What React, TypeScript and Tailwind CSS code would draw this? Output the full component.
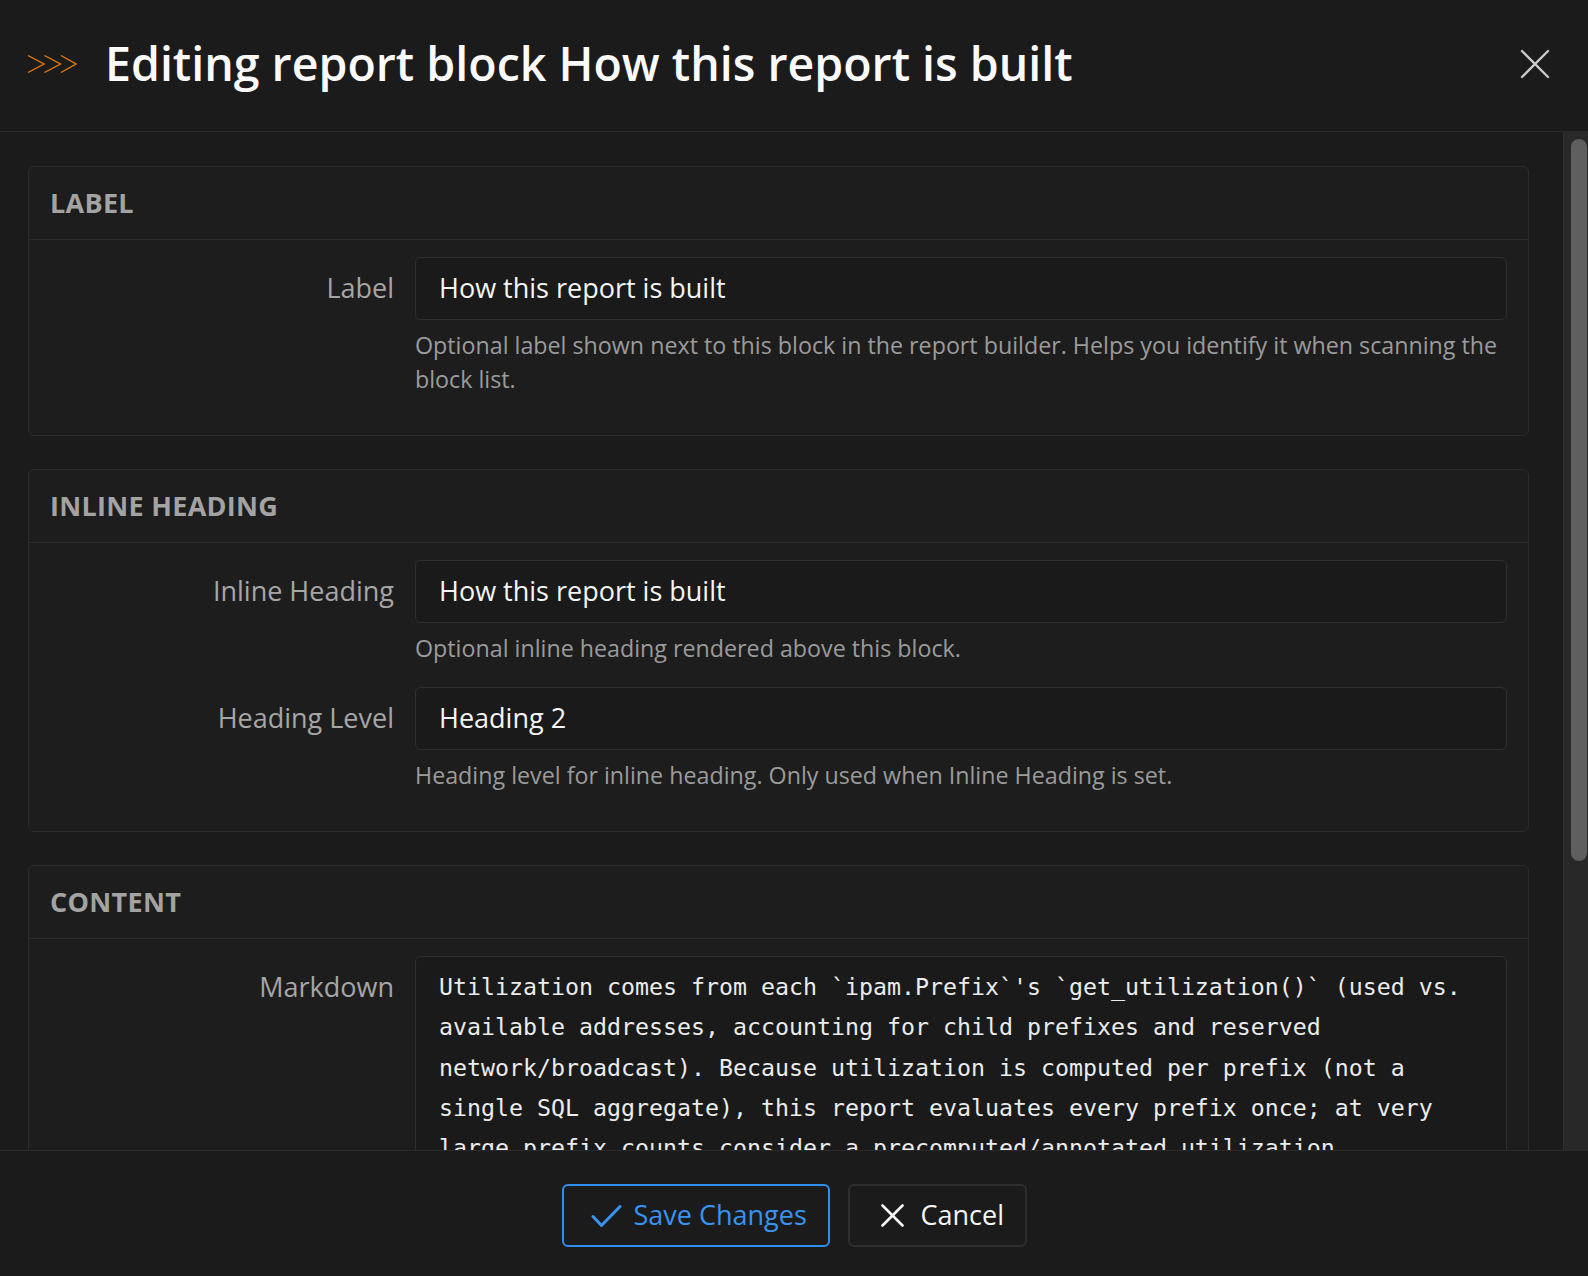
// Report block editor dialog: label, inline heading and markdown content sections
import type { ReactNode } from 'react';

const markdownLines = [
  "Utilization comes from each `ipam.Prefix`'s `get_utilization()` (used vs.",
  'available addresses, accounting for child prefixes and reserved',
  'network/broadcast). Because utilization is computed per prefix (not a',
  'single SQL aggregate), this report evaluates every prefix once; at very',
  'large prefix counts consider a precomputed/annotated utilization',
];

function Section({ title, children }: { title: string; children: ReactNode }) {
  return (
    <section className="rounded-[6px] border border-[#2b2b2b] bg-[#1d1d1d]">
      <div className="flex h-[73px] items-center border-b border-[#2b2b2b] px-[21px]">
        <h2 className="text-[27px] font-bold uppercase tracking-[0.3px] text-[#a3a3a3]">{title}</h2>
      </div>
      <div className="px-[21px] pt-[17px] pb-[18px]">{children}</div>
    </section>
  );
}

function Field({ label, children, help }: { label: string; children: ReactNode; help?: string }) {
  return (
    <div className="mb-[21px] flex">
      <div className="flex h-[63px] w-[344px] shrink-0 items-center justify-end text-[27px] text-[#a6a6a6]">{label}</div>
      <div className="ml-[21px] min-w-0 flex-1">
        {children}
        {help && <p className="mt-[9px] text-[23.25px] leading-[33.5px] text-[#9b9b9b]">{help}</p>}
      </div>
    </div>
  );
}

function TextInput({ value }: { value: string }) {
  return (
    <div className="flex h-[63px] items-center rounded-[6px] border border-[#303030] bg-[#1a1a1a] px-[23px] text-[27px] text-[#f5f5f5]">
      {value}
    </div>
  );
}

export default function App() {
  return (
    <div className="flex h-screen flex-col overflow-hidden bg-[#1b1b1b] font-['Open_Sans',sans-serif] text-white">
      <header className="flex h-[132px] shrink-0 items-center border-b border-[#2a2a2a] bg-[#1b1b1b] pb-[3px] pl-[27px] pr-[38px]">
        <svg width="50" height="20" viewBox="0 0 50 20" fill="none" stroke="#e8790c" strokeWidth="1.4" strokeLinejoin="miter">
          <polyline points="1,1.5 17,10 1,18.5" />
          <polyline points="17.5,1.5 33.5,10 17.5,18.5" />
          <polyline points="34,1.5 49,10 34,18.5" />
        </svg>
        <h1 className="ml-[28px] flex-1 text-[46.5px] font-semibold text-[#fafafa]">
          Editing report block How this report is built
        </h1>
        <button className="flex h-[30px] w-[30px] items-center justify-center">
          <svg width="30" height="30" viewBox="0 0 30 30" stroke="#c9c9c9" strokeWidth="2.4" strokeLinecap="round">
            <line x1="2" y1="2" x2="28" y2="28" />
            <line x1="28" y1="2" x2="2" y2="28" />
          </svg>
        </button>
      </header>

      <div className="flex min-h-0 flex-1">
        <main className="min-w-0 flex-1 overflow-hidden pt-[34px] pl-[28px] pr-[34px]">
          <div className="flex flex-col gap-[33px]">
            <Section title="Label">
              <Field
                label="Label"
                help="Optional label shown next to this block in the report builder. Helps you identify it when scanning the block list."
              >
                <TextInput value="How this report is built" />
              </Field>
            </Section>

            <Section title="Inline Heading">
              <Field label="Inline Heading" help="Optional inline heading rendered above this block.">
                <TextInput value="How this report is built" />
              </Field>
              <Field label="Heading Level" help="Heading level for inline heading. Only used when Inline Heading is set.">
                <TextInput value="Heading 2" />
              </Field>
            </Section>

            <Section title="Content">
              <Field label="Markdown">
                <div className="h-[320px] rounded-[6px] border border-[#303030] bg-[#1a1a1a] px-[23px] pt-[10px] font-['DejaVu_Sans_Mono',monospace] text-[23.25px] leading-[40.25px] text-[#ececec]">
                  {markdownLines.map((line) => (
                    <div key={line} className="whitespace-pre">
                      {line}
                    </div>
                  ))}
                </div>
              </Field>
            </Section>
          </div>
        </main>
        <div className="w-[25px] shrink-0 border-l border-[#303030] bg-[#282828] pt-[7px] pl-[7px]">
          <div className="h-[722px] w-[16px] rounded-full bg-[#5f5f5f]" />
        </div>
      </div>

      <footer className="flex h-[126px] shrink-0 justify-center gap-[18px] border-t border-[#2a2a2a] bg-[#1b1b1b] pt-[33px]">
        <button className="flex h-[63px] w-[268px] items-center gap-[12px] rounded-[6px] border-2 border-[#2f8fef] pl-[27px] text-[27px] text-[#3894f0]">
          <svg width="31" height="24" viewBox="0 0 31 24" fill="none" stroke="#3894f0" strokeWidth="3" strokeLinecap="round" strokeLinejoin="round">
            <polyline points="2,12.5 10.5,21.5 29,2.5" />
          </svg>
          Save Changes
        </button>
        <button className="flex h-[63px] w-[179px] items-center gap-[17px] rounded-[6px] border-2 border-[#2e2e2e] pl-[31px] text-[27px] text-[#f5f5f5]">
          <svg width="23" height="23" viewBox="0 0 23 23" stroke="#f5f5f5" strokeWidth="2.6" strokeLinecap="round">
            <line x1="1.5" y1="1.5" x2="21.5" y2="21.5" />
            <line x1="21.5" y1="1.5" x2="1.5" y2="21.5" />
          </svg>
          Cancel
        </button>
      </footer>
    </div>
  );
}
